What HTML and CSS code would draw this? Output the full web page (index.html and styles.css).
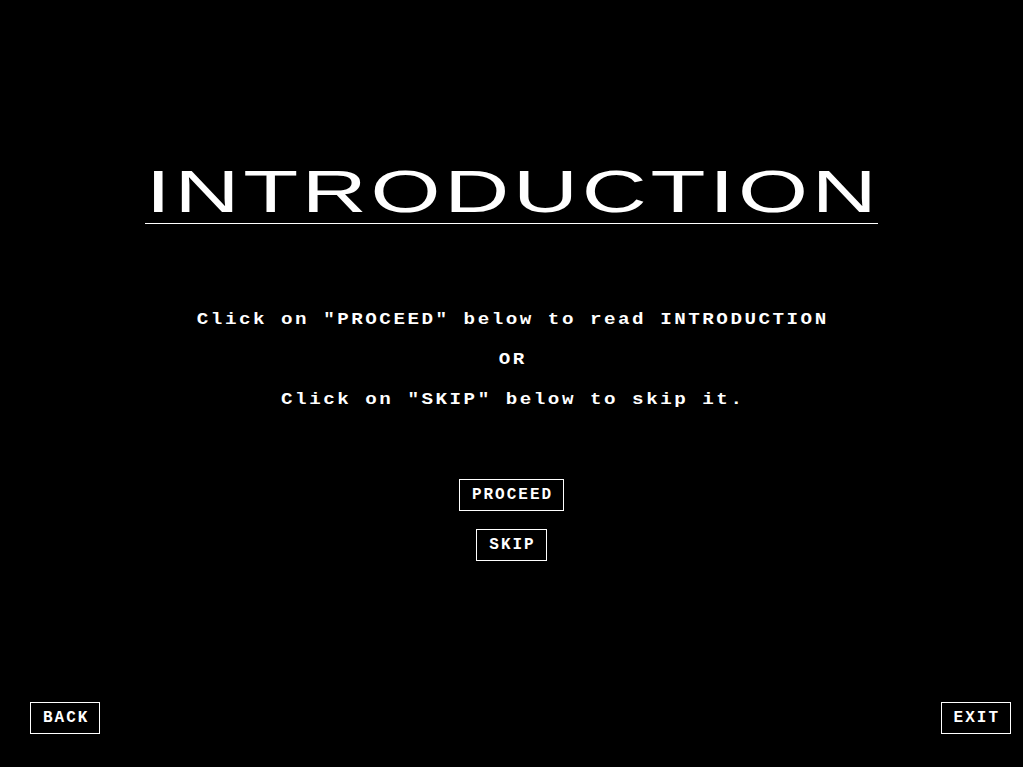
FILE: index.html
```html
<!DOCTYPE html>
<html lang="en">
<head>
<meta charset="utf-8">
<title>Introduction</title>
<link rel="stylesheet" href="styles.css">
</head>
<body>
<main class="screen">
  <header class="title-wrap">
    <h1 class="title"><span class="title-text">INTRODUCTION</span></h1>
  </header>
  <section class="message">
    <p>Click on "PROCEED" below to read INTRODUCTION</p>
    <p>OR</p>
    <p>Click on "SKIP" below to skip it.</p>
  </section>
  <div class="choices">
    <button class="btn" type="button">PROCEED</button>
    <button class="btn" type="button">SKIP</button>
  </div>
  <footer class="nav">
    <button class="btn" type="button">BACK</button>
    <button class="btn" type="button">EXIT</button>
  </footer>
</main>
</body>
</html>
```
FILE: styles.css
```css
html, body {
  margin: 0;
  padding: 0;
  background: #000;
}

.screen {
  width: 1023px;
  height: 767px;
  display: flex;
  flex-direction: column;
  align-items: center;
  color: #fff;
  overflow: hidden;
}

.title-wrap {
  margin-top: 162px;
  width: 733px;
  padding-bottom: 1px;
  border-bottom: 1px solid #fff;
}

.title {
  margin: 0;
  text-align: center;
  font-family: "Liberation Sans", Arial, sans-serif;
  font-weight: normal;
  font-size: 60px;
  line-height: 60px;
}

.title-text {
  display: inline-block;
  letter-spacing: 2.5px;
  padding-left: 2.5px;
  transform: scaleX(1.5);
}

.message {
  margin-top: 76px;
  align-self: stretch;
  text-align: center;
  font-family: "Liberation Mono", "Courier New", monospace;
  font-weight: bold;
  font-size: 16px;
  line-height: 40px;
  letter-spacing: 2.1px;
}

.message p {
  margin: 0;
  padding-left: 2.1px;
  white-space: pre;
  transform: scaleX(1.2);
}

.choices {
  margin-top: 59px;
  display: flex;
  flex-direction: column;
  align-items: center;
  gap: 18px;
}

.btn {
  background: #000;
  color: #fff;
  border: 1px solid #fff;
  border-radius: 0;
  margin: 0;
  padding: 0 10px 0 12px;
  height: 32px;
  font-family: "Liberation Mono", "Courier New", monospace;
  font-weight: bold;
  font-size: 16px;
  line-height: 30px;
  letter-spacing: 2px;
}

.nav {
  margin-top: auto;
  align-self: stretch;
  display: flex;
  justify-content: space-between;
  padding: 0 12px 33px 30px;
}
```
